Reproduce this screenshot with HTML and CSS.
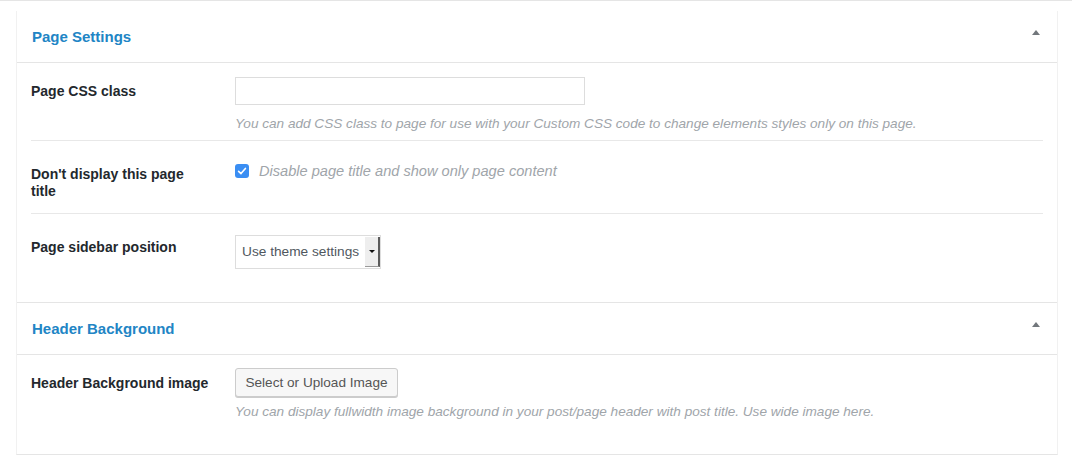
FILE: index.html
```html
<!DOCTYPE html>
<html lang="en">
<head>
<meta charset="utf-8">
<title>Page Settings</title>
<link rel="stylesheet" href="styles.css">
</head>
<body>
<div class="page">
  <div class="metabox">
    <section class="section">
      <div class="section-head">
        <h2 class="section-title">Page Settings</h2>
        <span class="toggle" aria-hidden="true"></span>
      </div>
      <div class="rows">
        <div class="row row-input">
          <div class="label">Page CSS class</div>
          <div class="control">
            <input class="text-input" type="text">
            <p class="desc">You can add CSS class to page for use with your Custom CSS code to change elements styles only on this page.</p>
          </div>
        </div>
        <div class="row row-check">
          <div class="label">Don't display this page title</div>
          <div class="control">
            <label class="check">
              <svg class="checkbox" width="14" height="14" viewBox="0 0 14 14">
                <rect x="0" y="0" width="14" height="14" rx="3" fill="#3a8ef3"/>
                <path d="M3.6 7.3 L6 9.6 L10.4 4.4" fill="none" stroke="#fff" stroke-width="1.6" stroke-linecap="round" stroke-linejoin="round"/>
              </svg>
              <span class="check-text">Disable page title and show only page content</span>
            </label>
          </div>
        </div>
        <div class="row row-select">
          <div class="label">Page sidebar position</div>
          <div class="control">
            <div class="select">
              <span class="select-value">Use theme settings</span>
              <span class="select-arrow"><span class="caret"></span></span>
            </div>
          </div>
        </div>
      </div>
    </section>
    <section class="section">
      <div class="section-head">
        <h2 class="section-title">Header Background</h2>
        <span class="toggle" aria-hidden="true"></span>
      </div>
      <div class="rows">
        <div class="row row-button">
          <div class="label">Header Background image</div>
          <div class="control">
            <button class="button" type="button">Select or Upload Image</button>
            <p class="desc">You can display fullwidth image background in your post/page header with post title. Use wide image here.</p>
          </div>
        </div>
      </div>
    </section>
  </div>
</div>
</body>
</html>
```
FILE: styles.css
```css
* { box-sizing: border-box; }
html, body { margin: 0; padding: 0; background: #fff; }
body {
  font-family: "Liberation Sans", Arial, sans-serif;
  color: #23282d;
  font-size: 13px;
}
.page {
  border-top: 1px solid #e5e5e5;
  padding-top: 10px;
}
.metabox {
  margin-left: 16px;
  width: 1042px;
  border-left: 1px solid #f1f1f1;
  border-right: 1px solid #f1f1f1;
  border-bottom: 1px solid #e5e5e5;
}
.section + .section { border-top: 1px solid #e5e5e5; }
.section-head {
  height: 52px;
  border-bottom: 1px solid #e5e5e5;
  display: flex;
  align-items: center;
  padding: 0 17px 0 15px;
}
.section-title {
  margin: 0;
  flex: 1;
  font-size: 15px;
  font-weight: bold;
  color: #2185c5;
  line-height: 20px;
}
.toggle {
  width: 0;
  height: 0;
  border-left: 4px solid transparent;
  border-right: 4px solid transparent;
  border-bottom: 5px solid #72777c;
  margin-top: -8px;
}
.rows { padding: 0 14px; }
.row {
  display: grid;
  grid-template-columns: 204px 1fr;
}
.row + .row { border-top: 1px solid #e8e8e8; }
.label {
  font-weight: bold;
  font-size: 14px;
  line-height: 17px;
  padding-right: 24.5px;
}
.control { min-width: 0; }

.row-input { height: 77px; }
.row-input .label { padding-top: 20px; }
.row-input .control { padding-top: 14px; }
.text-input {
  display: block;
  width: 350px;
  height: 28px;
  border: 1px solid #ddd;
  background: #fff;
  margin: 0;
  padding: 3px 5px;
  font: inherit;
}
.desc {
  margin: 10px 0 0;
  font-size: 13.6px;
  line-height: 18px;
  font-style: italic;
  color: #a0a5aa;
}

.row-check { height: 73px; }
.row-check .label { padding-top: 25px; }
.row-check .control { padding-top: 21px; }
.check { display: flex; align-items: center; gap: 10px; }
.checkbox { display: block; flex: none; }
.check-text {
  font-style: italic;
  font-size: 14.6px;
  line-height: 18px;
  color: #a0a5aa;
}

.row-select { height: 89px; }
.row-select .label { padding-top: 25px; }
.row-select .control { padding-top: 21px; }
.select {
  display: flex;
  width: 146px;
  height: 34px;
  border: 1px solid #ddd;
  background: #fff;
}
.select-value {
  flex: 1;
  padding-left: 6px;
  line-height: 32px;
  font-size: 13.7px;
  color: #50575e;
  white-space: nowrap;
}
.select-arrow {
  width: 15px;
  margin: 1px 0;
  background: #eeeeee;
  border-right: 2px solid #5b5b5b;
  border-bottom: 1px solid #9a9a9a;
  display: flex;
  align-items: center;
  justify-content: center;
}
.caret {
  width: 0;
  height: 0;
  border-left: 3px solid transparent;
  border-right: 3px solid transparent;
  border-top: 3px solid #111;
}

.row-button { height: 99px; }
.row-button .label { padding-top: 20px; }
.row-button .control { padding-top: 13px; }
.button {
  display: block;
  height: 29px;
  width: 163px;
  padding: 0;
  margin: 0;
  border: 1px solid #cccccc;
  border-radius: 3px;
  background: #f7f7f7;
  box-shadow: 0 1px 0 #cccccc;
  font-family: inherit;
  font-size: 13.6px;
  color: #555;
  line-height: 27px;
}
.row-button .desc { margin-top: 6px; }
```
